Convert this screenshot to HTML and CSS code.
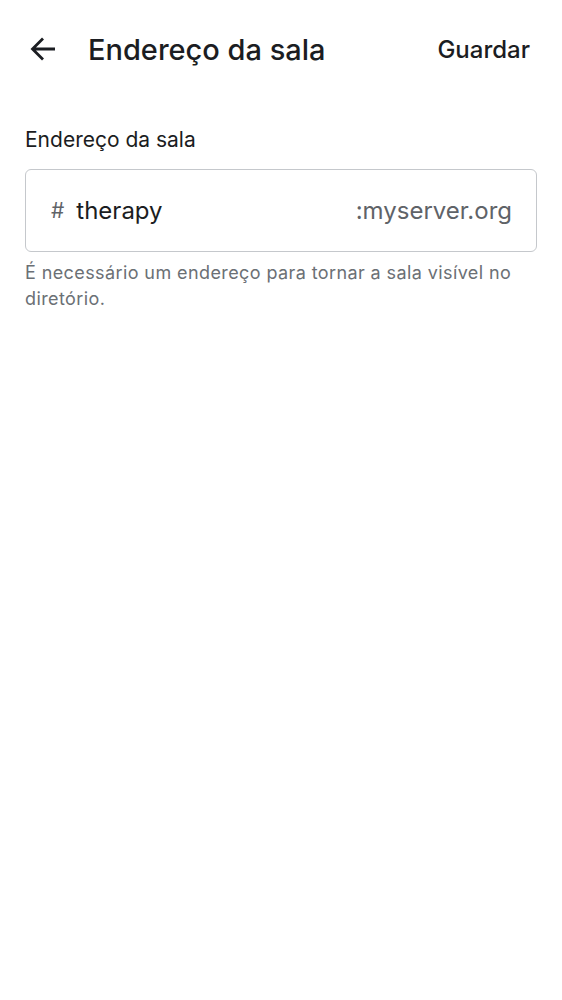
FILE: index.html
```html
<!DOCTYPE html>
<html lang="pt">
<head>
<meta charset="utf-8">
<link rel="stylesheet" href="styles.css">
</head>
<body>
<header class="topbar">
  <button class="back" aria-label="Voltar">
    <svg width="28" height="28" viewBox="0 0 28 28"><path d="M26 14H3.5M14 3.5L3.5 14L14 24.5" fill="none" stroke="#1b1d22" stroke-width="2.8"/></svg>
  </button>
  <h1 class="title">Endereço da sala</h1>
  <span class="save">Guardar</span>
</header>
<main class="content">
  <label class="label">Endereço da sala</label>
  <div class="field">
    <span class="hash">#</span>
    <span class="value">therapy</span>
    <span class="server">:myserver.org</span>
  </div>
  <p class="help">É necessário um endereço para tornar a sala visível no diretório.</p>
</main>
</body>
</html>
```
FILE: styles.css
```css
html, body { margin: 0; padding: 0; background: #fff; }
body { font-family: Inter, Roboto, "Noto Sans", sans-serif; color: #1b1d22; }
.topbar { display: flex; align-items: center; height: 98px; padding: 0 32px 0 29px; box-sizing: border-box; }
.back { background: none; border: 0; padding: 0; width: 28px; height: 30px; display: flex; align-items: center; justify-content: center; margin-right: 31px; }
.title { flex: 1; margin: 0; font-size: 29px; font-weight: 500; }
.save { font-size: 24px; font-weight: 500; }
.content { padding: 28px 25px 0 25px; }
.label { display: block; font-size: 21px; line-height: 28px; margin-bottom: 15px; }
.field { display: flex; align-items: center; height: 83px; box-sizing: border-box; border: 1.5px solid #c5c8cc; border-radius: 6px; padding: 0 24px 0 25px; font-size: 24px; }
.hash { color: #5f6368; margin-right: 12px; font-size: 21px; }
.value { flex: 1; }
.server { color: #5f6368; }
.help { margin: 8px 0 0; font-size: 18px; line-height: 26px; color: #6b7075; letter-spacing: 0.4px; }
```
